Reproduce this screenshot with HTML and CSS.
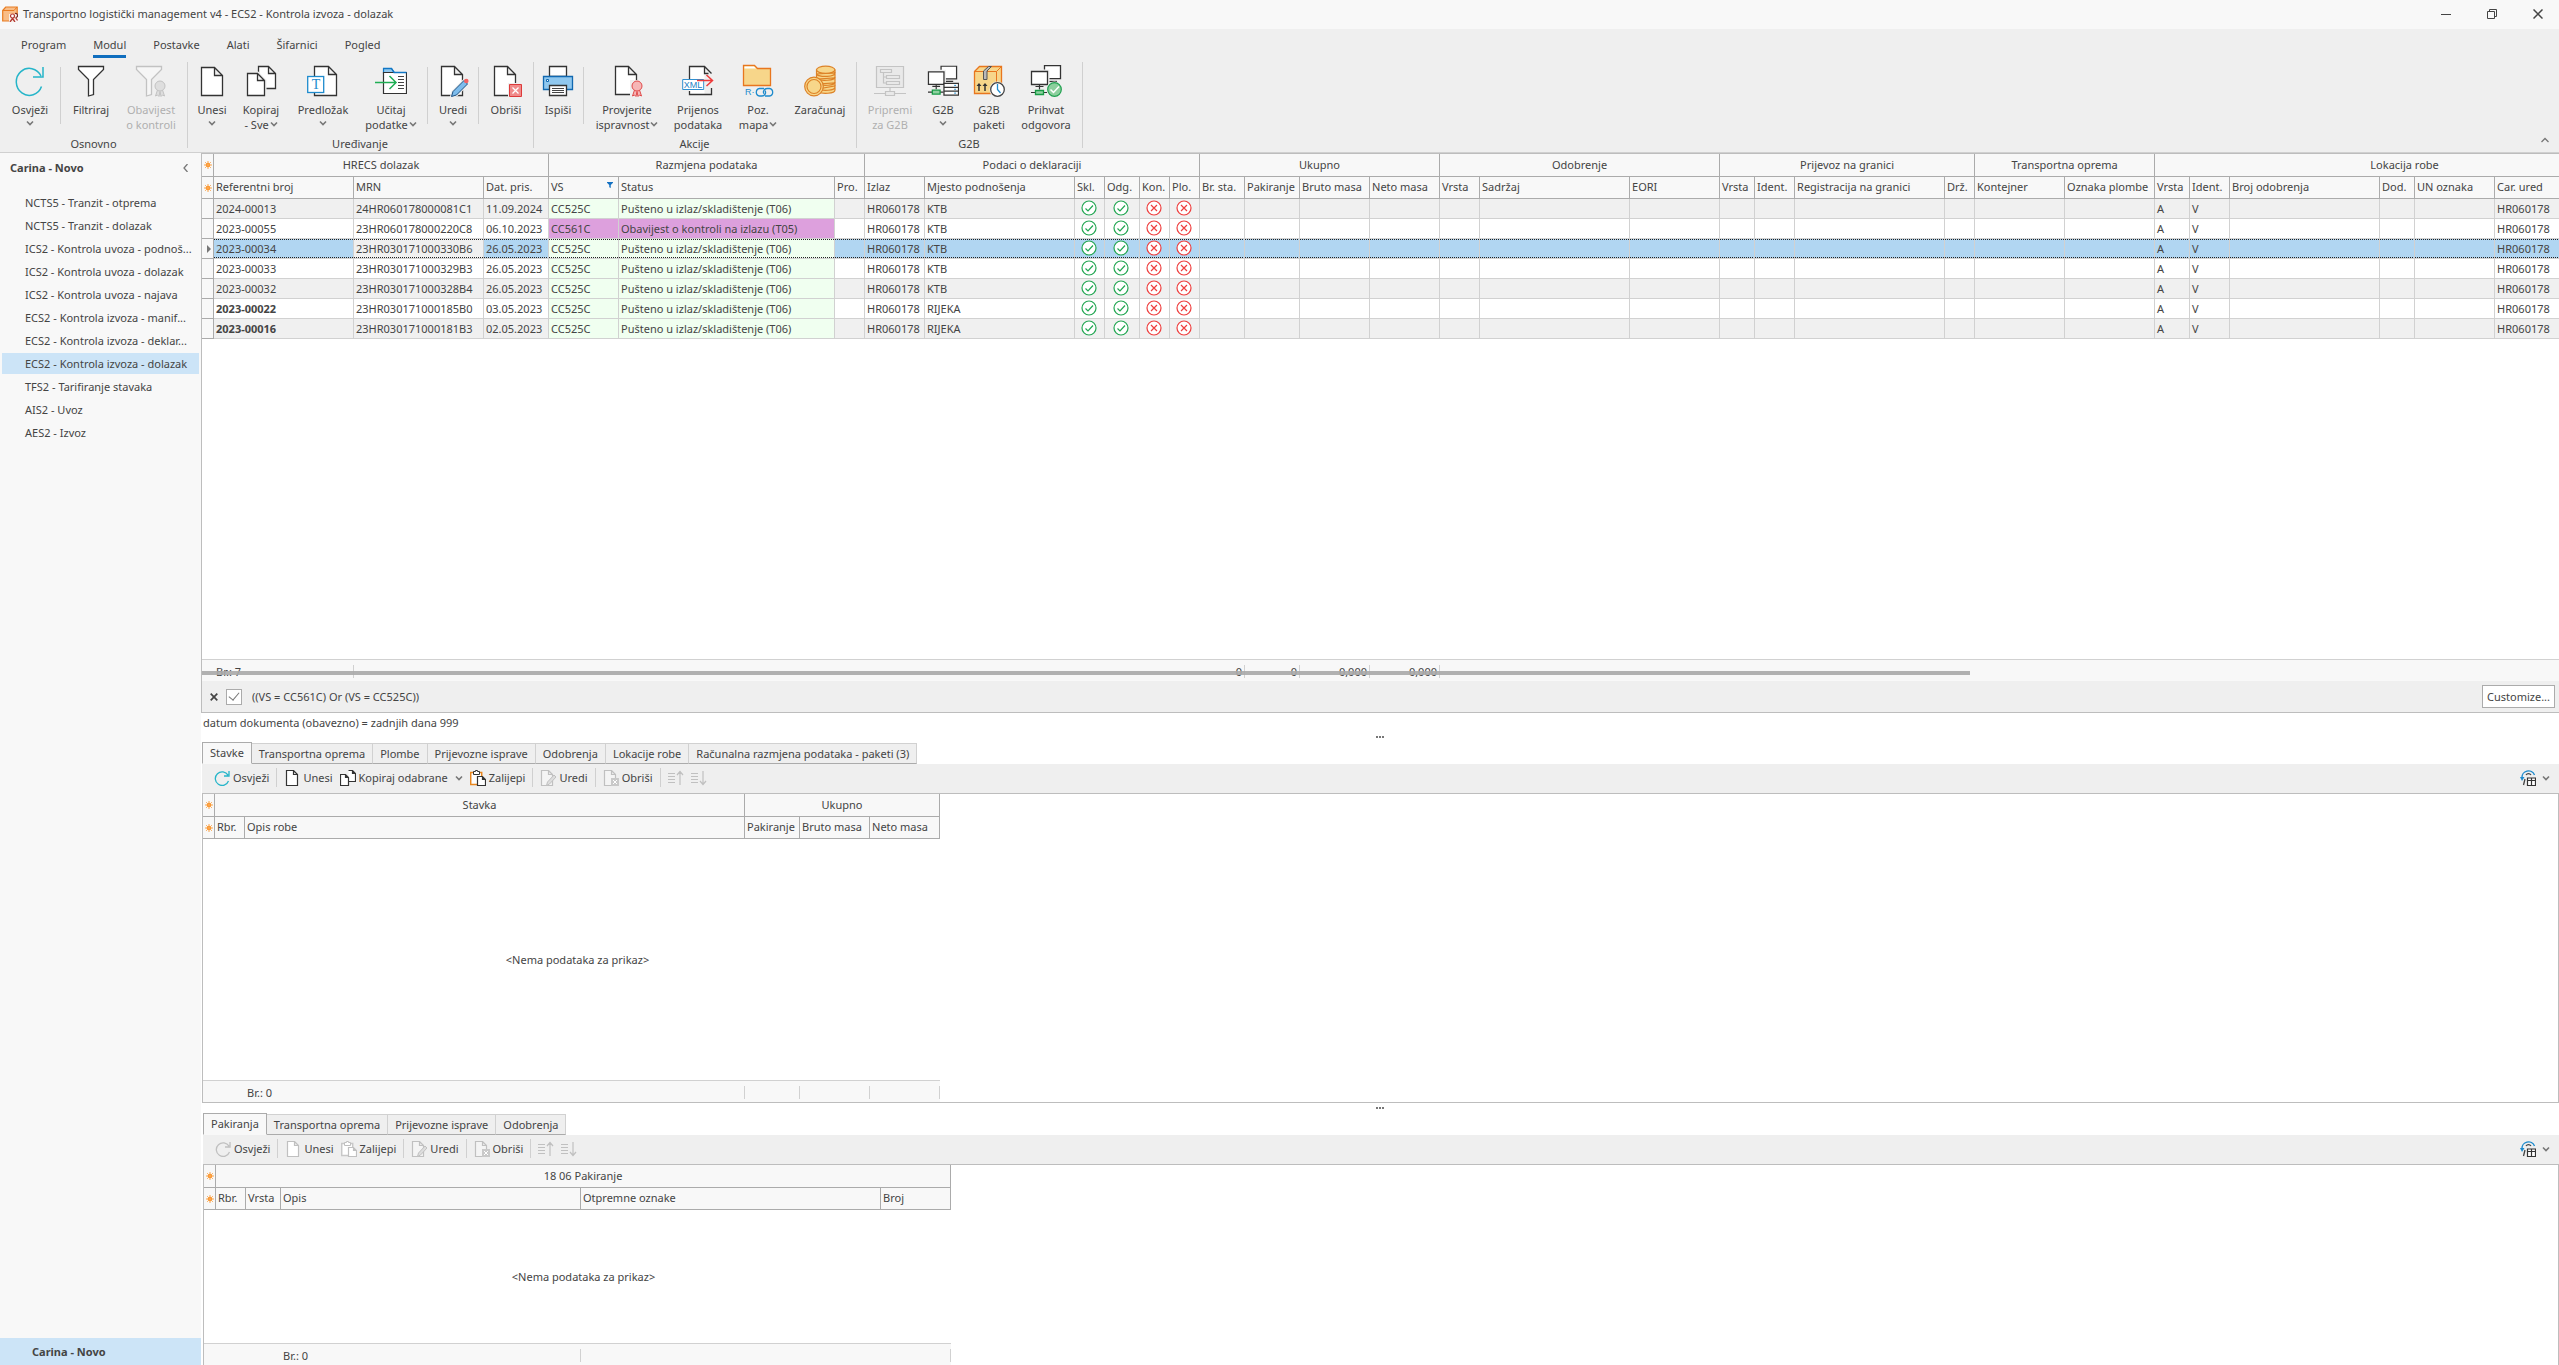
FILE: index.html
```html
<!DOCTYPE html>
<html lang="hr">
<head>
<meta charset="utf-8">
<title>Transportno logistički management v4</title>
<link rel="stylesheet" href="styles.css">
</head>
<body>
<svg class="defs" aria-hidden="true">
  <symbol id="chev" viewBox="0 0 8 8"><path d="M1 2.500l3 3 3-3" fill="none" stroke="#777" stroke-width="1.600"/></symbol>
  <symbol id="star" viewBox="0 0 8 8"><circle cx="4" cy="4" r="2.300" fill="#fb8c1e"/><path d="M4 0v8M0 4h8M1.200 1.200l5.600 5.600M6.800 1.200L1.200 6.800" stroke="#fba64d" stroke-width="1"/></symbol>
  <symbol id="ok" viewBox="0 0 16 16"><circle cx="8" cy="8" r="7" fill="#fff" stroke="#22a652" stroke-width="1.200"/><path d="M4.500 8.500L7 11l5-5.500" fill="none" stroke="#22a652" stroke-width="1.200"/></symbol>
  <symbol id="no" viewBox="0 0 16 16"><circle cx="8" cy="8" r="7" fill="#fff" stroke="#ee3e3e" stroke-width="1.200"/><path d="M5 5l6 6M11 5l-6 6" stroke="#ee3e3e" stroke-width="1.200"/></symbol>
  <symbol id="medal" viewBox="0 0 12 17"><path d="M3.500 10l-2 6 2-1 1.500 1.500 1-5 1 5 1.500-1.500 2 1-2-6" stroke-linejoin="round"/><circle cx="6" cy="6" r="5"/></symbol>

  <symbol id="i-refresh" viewBox="0 0 32 32"><path d="M27.500 21.500A13 13.500 0 1 1 27 11M29 2v10H19" fill="none" stroke="#26b5c9" stroke-width="1.500"/></symbol>
  <symbol id="i-filter" viewBox="0 0 32 32"><path d="M3.500 1.500h25v3L18.500 14.500v15l-5 1.500V14.500L3.500 4.500z" fill="#fff" stroke="#333" stroke-width="1.300"/></symbol>
  <symbol id="i-notice" viewBox="0 0 32 32"><path d="M1.500 1.500h25v3L16.500 14.500v15l-5 1.500V14.500L1.500 4.500z" fill="#f6f6f6" stroke="#c2c2c2" stroke-width="1.300"/><use href="#medal" x="19" y="15" width="12" height="17" fill="#dedede" stroke="#c2c2c2"/></symbol>
  <symbol id="i-new" viewBox="0 0 32 32"><path d="M5.500 2.500h13l8 8v20h-21zM18.500 2.500v8h8" fill="#fff" stroke="#333" stroke-width="1.300"/></symbol>
  <symbol id="i-copy" viewBox="0 0 32 32"><path d="M13.500 1.500h10l7 7v15h-17zM23.500 1.500v7h7" fill="#fff" stroke="#333" stroke-width="1.300"/><path d="M2.500 8.500h10l7 7v15h-17z" fill="#fff" stroke="#efefef" stroke-width="4"/><path d="M2.500 8.500h10l7 7v15h-17zM12.500 8.500v7h7" fill="#fff" stroke="#333" stroke-width="1.300"/></symbol>
  <symbol id="i-load" viewBox="0 0 32 32"><path d="M8.500 8V3.500h8l3 4h12V9z" fill="#90c8ef" stroke="#1177c5" stroke-width="1.200"/><path d="M8.500 7.500h23v21h-23z" fill="#fff" stroke="#333" stroke-width="1.200"/><path d="M8 3.500h8.500l2.500 4h12.500" fill="none" stroke="#1177c5" stroke-width="1.300"/><path d="M23 11.500h6M23 14.500h6M23 17.500h6M23 20.500h6M23 23.500h6" stroke="#444"/><path d="M0 17.500h20.500M14.500 11l6.500 6.500-6.500 6.500" fill="none" stroke="#1fae54" stroke-width="1.500"/></symbol>
  <symbol id="i-edit" viewBox="0 0 32 32"><path d="M4.500 1.500h13l8 8v21h-21zM17.500 1.500v8h8" fill="#fff" stroke="#333" stroke-width="1.300"/><path d="M14.500 31.500l1.500-5 12-12 3.500 3.500-12 12z" fill="#7dbcec" stroke="#efefef" stroke-width="3"/><path d="M14.500 31.500l1.500-5 11-11 3.500 3.500-11 11z" fill="#7dbcec" stroke="#1b4f80" stroke-width="1"/><circle cx="29.300" cy="16" r="2.300" fill="#f46262"/></symbol>
  <symbol id="i-delete" viewBox="0 0 32 32"><path d="M4.500 1.500h13l8 8v21h-21zM17.500 1.500v8h8" fill="#fff" stroke="#333" stroke-width="1.300"/><path d="M18 18h14v14H18z" fill="#efefef"/><path d="M19.500 19.500h12v12h-12z" fill="#f08a8a" stroke="#dd3a3a"/><path d="M22.500 22.500l6 6M28.500 22.500l-6 6" stroke="#fff" stroke-width="1.300"/></symbol>
  <symbol id="i-print" viewBox="0 0 32 32"><path d="M7.500 1.500h17v10h-17z" fill="#fff" stroke="#333" stroke-width="1.300"/><path d="M1.500 11.500h29v13h-29z" fill="#90c8ef" stroke="#1168b0" stroke-width="1.300"/><path d="M4.500 14.500h2v2h-2z" fill="#fff" stroke="#1168b0"/><path d="M7.500 20.500h17v10h-17z" fill="#fff" stroke="#333" stroke-width="1.300"/><path d="M10 23.500h12M10 25.500h12M10 27.500h12" stroke="#444"/></symbol>
  <symbol id="i-check" viewBox="0 0 32 32"><path d="M4.500 1.500h13l8 8v20h-21zM17.500 1.500v8h8" fill="#fff" stroke="#333" stroke-width="1.300"/><path d="M19 15h13v17H19z" fill="#efefef"/><use href="#medal" x="20" y="15" width="12" height="17" fill="#f6b6b6" stroke="#e04a4a"/></symbol>
  <symbol id="i-coins" viewBox="0 0 32 32"><g fill="#f7d68a" stroke="#dd8227" stroke-width="1.200"><path d="M14 24v3c4 2 17 2 17-2v-4zM14 19v5c4 2 17 2 17-2v-4zM14 14v5c4 2 17 2 17-2v-4zM12.500 9v5c4 2 18.500 2 18.500-2V8zM12.500 5v4.500c4 3 18.500 2.500 18.500-1.500V5z"/><ellipse cx="21.700" cy="4.800" rx="9.200" ry="3.600"/><circle cx="10" cy="21.500" r="9.300"/><circle cx="10" cy="21.500" r="7"/></g></symbol>
  <symbol id="i-prepare" viewBox="0 0 32 32"><g fill="#e9e9e9" stroke="#c4c4c4" stroke-width="1.200"><path d="M2.500 1.500h27v21h-27z"/><path d="M6.500 4.500h11v3h-11zM12.500 10.500h13v3h-13zM12.500 16.500h13v3h-13zM9.500 7.500v10.500h3M9.500 12h3M16 22.500v4M0 28.500h32"/><path d="M11.500 26.500h9v4h-9z"/></g></symbol>
  <symbol id="monitors" viewBox="0 0 32 32"><path d="M14.500.7h16v13h-16z" fill="#fff" stroke="#333" stroke-width="1.300"/><path d="M19 16.500h8" stroke="#333" stroke-width="1.300"/><path d="M1.500 6.500h16v13h-16z" fill="#fff" stroke="#efefef" stroke-width="4"/><path d="M1.500 6.500h16v13h-16z" fill="#fff" stroke="#333" stroke-width="1.300"/><path d="M9.500 19.500v5M5.500 21.500h8M1 27.500h16" stroke="#333" stroke-width="1.200"/><path d="M5.500 25.500h8v4h-8z" fill="#8fd0a0" stroke="#169a44" stroke-width="1.300"/></symbol>
  <symbol id="i-g2b" viewBox="0 0 33 32"><use href="#monitors" width="32" height="32"/><path d="M17.500 18.500h15v12h-15zM17.500 22.500h15M17.500 26.500h15" fill="#fff" stroke="#333" stroke-width="1.300"/><path d="M28 20.500h2M28 24.500h2M28 28.500h2" stroke="#1e8bcd"/></symbol>
  <symbol id="i-box" viewBox="0 0 32 32"><path d="M1.500 6.500l5-5h22v22l-5 5h-22z" fill="#f7d68a" stroke="#e8761e" stroke-width="1.300"/><path d="M1.500 6.500h22l5-5M23.500 6.500v22" fill="none" stroke="#e8761e"/><path d="M10.500 14.500V6l5-4.500h3L14 6v8.500z" fill="#b9b9b9" stroke="#555"/><path d="M6 26v-7M12 26v-7" stroke="#333" stroke-width="1.500"/><path d="M3.500 21L6 18l2.500 3zM9.500 21l2.500-3 2.500 3z" fill="#333"/><circle cx="24.500" cy="24.500" r="8" fill="#efefef"/><circle cx="24.500" cy="24.500" r="6.800" fill="#fff" stroke="#444" stroke-width="1.300"/><path d="M24.500 19v5.500l3 3.500" fill="none" stroke="#1e8bcd" stroke-width="1.300"/></symbol>
  <symbol id="i-accept" viewBox="0 0 32 32"><use href="#monitors" width="32" height="32"/><circle cx="24.500" cy="24.500" r="8" fill="#efefef"/><circle cx="24.500" cy="24.500" r="6.800" fill="#8ccf9d" stroke="#1fa04f" stroke-width="1.200"/><path d="M20.500 24.500l3 3 5.500-6" fill="none" stroke="#fff" stroke-width="1.500"/></symbol>

  <symbol id="s-refresh" viewBox="0 0 16 16"><path d="M14.500 11A6.800 6.800 0 1 1 14 5.200M15 1v5h-5" fill="none" stroke="currentColor" stroke-width="1.300"/></symbol>
  <symbol id="s-new" viewBox="0 0 16 16"><path d="M2.500.5h7l4 4v11h-11zM9.500.5v4h4" fill="#fff" stroke="currentColor" stroke-width="1.200"/></symbol>
  <symbol id="s-copy" viewBox="0 0 16 16"><path d="M8.500.5h4l3 3v8h-7M12.500.5v3h3M.5 4.500h5l3 3v8h-8zM5.500 4.500v3h3" fill="#fff" stroke="currentColor" stroke-width="1.200"/></symbol>
  <symbol id="s-paste" viewBox="0 0 16 16"><path d="M.7 2.500h11v12H.7z" fill="#fff" stroke="var(--clip)" stroke-width="1.500"/><path d="M3.500 1.500h2V.5h2v1h2v3h-6z" fill="#fff" stroke="currentColor"/><path d="M7.500 6.500h5l3 3v6h-8zM12.500 6.500v3h3" fill="#fff" stroke="currentColor" stroke-width="1.200"/></symbol>
  <symbol id="s-edit" viewBox="0 0 16 16"><path d="M1.500.5h7l4 4v11h-11zM8.500.5v4h4" fill="#f4f4f4" stroke="currentColor" stroke-width="1.200"/><path d="M6.500 15.500l1-3.500 6.500-7 2 2-6.500 7z" fill="#ddd" stroke="currentColor"/></symbol>
  <symbol id="s-delete" viewBox="0 0 16 16"><path d="M1.500.5h7l4 4v11h-11zM8.500.5v4h4" fill="#f4f4f4" stroke="currentColor" stroke-width="1.200"/><path d="M8 8h8v8H8z" fill="#c9c9c9"/><path d="M10 10l4 4M14 10l-4 4" stroke="#fff"/></symbol>
  <symbol id="s-up" viewBox="0 0 16 16"><path d="M0 3.500h7M0 6.500h7M0 9.500h7M0 12.500h7M12 15V2M9 5l3-3.500L15 5" fill="none" stroke="currentColor" stroke-width="1.200"/></symbol>
  <symbol id="s-down" viewBox="0 0 16 16"><path d="M0 3.500h7M0 6.500h7M0 9.500h7M0 12.500h7M12 1v13M9 11l3 3.500 3-3.500" fill="none" stroke="currentColor" stroke-width="1.200"/></symbol>
  <symbol id="s-view" viewBox="0 0 16 16"><path d="M2 8a6.500 6.500 0 0 1 12.500-3" fill="none" stroke="#1e8bcd" stroke-width="1.400"/><path d="M0 7h4.500L2 11z" fill="#1e8bcd"/><path d="M6 5a3 3 0 0 1 5 0M5 9l-1.500 6" fill="none" stroke="#444" stroke-width="1.300"/><path d="M7.500 8h8v7.500h-8zM7.500 10.500h8M11.500 8v7.500" fill="#fff" stroke="#333" stroke-width="1.200"/></symbol>
</svg>

<header class="titlebar">
  <svg class="app-icon" viewBox="0 0 16 16"><path d="M.7 4.500l3-3.500h11.500v9l-4 5H.7z" fill="#f9bd87" stroke="#e87c22" stroke-width="1.200"/><path d="M1 4.500h11l3-3.500" fill="none" stroke="#e87c22"/><path d="M7 8h9v8H7z" fill="#f8f8f8" opacity=".85"/><path d="M10.500 12.500l-2.500 3.500M10.500 12.500l2.500 3.500M13.500 11.500l2 3" stroke="#b33a32" stroke-width="1.300"/><circle cx="10.500" cy="10" r="2" fill="#fff" stroke="#b33a32" stroke-width="1.200"/><path d="M13 7.500a2 2 0 0 1 1 4" fill="none" stroke="#7a2a24" stroke-width="1.200"/></svg>
  <h1 class="title">Transportno logistički management v4 - ECS2 - Kontrola izvoza - dolazak</h1>
  <div class="window-buttons">
    <button aria-label="Minimiziraj"><svg viewBox="0 0 10 10"><path d="M0 5.500h10" stroke="#444"/></svg></button>
    <button aria-label="Vrati"><svg viewBox="0 0 10 10"><path d="M.5 2.500h7v7h-7zM2.500 2.500v-2h7v7h-2" fill="none" stroke="#444"/></svg></button>
    <button aria-label="Zatvori"><svg viewBox="0 0 10 10"><path d="M.5.5l9 9M9.500.5l-9 9" stroke="#444" stroke-width="1.500"/></svg></button>
  </div>
</header>

<div class="ribbon">
  <nav class="ribbon-tabs">
    <button>Program</button><button class="active">Modul</button><button>Postavke</button><button>Alati</button><button>Šifarnici</button><button>Pogled</button>
  </nav>
  <div class="ribbon-groups">
    <section class="group">
      <div class="group-items">
        <button class="big w54"><svg><use href="#i-refresh"/></svg><span>Osvježi</span><svg class="chev"><use href="#chev"/></svg></button>
        <i class="sep"></i>
        <button class="big w54"><svg><use href="#i-filter"/></svg><span>Filtriraj</span></button>
        <button class="big w66" disabled><svg><use href="#i-notice"/></svg><span>Obavijest<br>o kontroli</span></button>
      </div>
      <h2>Osnovno</h2>
    </section>
    <section class="group">
      <div class="group-items">
        <button class="big w44"><svg><use href="#i-new"/></svg><span>Unesi</span><svg class="chev"><use href="#chev"/></svg></button>
        <button class="big w54"><svg><use href="#i-copy"/></svg><span>Kopiraj<br>- Sve <svg class="chev"><use href="#chev"/></svg></span></button>
        <button class="big w70"><svg viewBox="0 0 32 32"><path d="M7.500 1.500h14l8 8v21h-22zM21.500 1.500v8h8" fill="#fff" stroke="#333" stroke-width="1.300"/><rect x=".7" y="11.500" width="16" height="16" fill="#fff" stroke="#1e8bcd" stroke-width="1.300"/><text x="9" y="24" text-anchor="middle" class="svg-serif" font-size="14" fill="#1e8bcd">T</text></svg><span>Predložak</span><svg class="chev"><use href="#chev"/></svg></button>
        <button class="big w66"><svg><use href="#i-load"/></svg><span>Učitaj<br>podatke <svg class="chev"><use href="#chev"/></svg></span></button>
        <i class="sep"></i>
        <button class="big w44"><svg><use href="#i-edit"/></svg><span>Uredi</span><svg class="chev"><use href="#chev"/></svg></button>
        <i class="sep"></i>
        <button class="big w48"><svg><use href="#i-delete"/></svg><span>Obriši</span></button>
      </div>
      <h2>Uređivanje</h2>
    </section>
    <section class="group">
      <div class="group-items">
        <button class="big w44"><svg><use href="#i-print"/></svg><span>Ispiši</span></button>
        <i class="sep"></i>
        <button class="big w80"><svg><use href="#i-check"/></svg><span>Provjerite<br>ispravnost <svg class="chev"><use href="#chev"/></svg></span></button>
        <button class="big w62"><svg viewBox="0 0 32 32"><path d="M7.500 1h15v29h-15z" fill="#fff"/><path d="M7.500 14V1.500h15l7 7M22.500 1.500v7h4M7.500 26v3.500h22V23" fill="none" stroke="#333" stroke-width="1.300"/><path d="M.7 14.500h21v10H.7z" fill="#fff" stroke="#2f8fd0"/><text x="11" y="23" text-anchor="middle" class="svg-sans" font-size="9" fill="#1e7fc5">XML</text><path d="M15 15.500h15M24.500 10l6 5.500-6 5.500" fill="none" stroke="#ee3a3a" stroke-width="1.500"/></svg><span>Prijenos<br>podataka</span></button>
        <button class="big w58"><svg viewBox="0 0 32 32"><path d="M1.500 20.500v-20h11l3 3h13v17z" fill="#f7d68a" stroke="#e8761e" stroke-width="1.300"/><path d="M2.500 3.500V1.500h9.500l2 2z" fill="#fff"/><text x="3" y="30" class="svg-sans" font-size="9" fill="#1e8bcd">R·</text><g fill="none" stroke="#1e8bcd" stroke-width="1.300"><path d="M22 23.500h-4.500a3.800 3.800 0 0 0 0 7.500H20a3.600 3.600 0 0 0 3-5.500"/><path d="M23 31h4.500a3.800 3.800 0 0 0 0-7.500H25a3.600 3.600 0 0 0-3 5.500"/></g></svg><span>Poz.<br>mapa <svg class="chev"><use href="#chev"/></svg></span></button>
        <button class="big w66"><svg><use href="#i-coins"/></svg><span>Zaračunaj</span></button>
      </div>
      <h2>Akcije</h2>
    </section>
    <section class="group">
      <div class="group-items">
        <button class="big w62" disabled><svg><use href="#i-prepare"/></svg><span>Pripremi<br>za G2B</span></button>
        <button class="big w44"><svg><use href="#i-g2b"/></svg><span>G2B</span><svg class="chev"><use href="#chev"/></svg></button>
        <button class="big w48"><svg><use href="#i-box"/></svg><span>G2B<br>paketi</span></button>
        <button class="big w66"><svg><use href="#i-accept"/></svg><span>Prihvat<br>odgovora</span></button>
      </div>
      <h2>G2B</h2>
    </section>
    <button class="collapse" aria-label="Sažmi vrpcu"><svg viewBox="0 0 8 8"><path d="M.5 6L4 2.500 7.500 6" fill="none" stroke="#777" stroke-width="1.300"/></svg></button>
  </div>
</div>

<div class="shell">
  <aside class="sidebar">
    <div class="side-head"><h2>Carina - Novo</h2><button aria-label="Sakrij"><svg viewBox="0 0 8 8"><path d="M5.500 0L2 4l3.500 4" fill="none" stroke="#777" stroke-width="1.300"/></svg></button></div>
    <nav class="side-nav">
      <a href="#">NCTS5 - Tranzit - otprema</a>
      <a href="#">NCTS5 - Tranzit - dolazak</a>
      <a href="#">ICS2 - Kontrola uvoza - podnoš...</a>
      <a href="#">ICS2 - Kontrola uvoza - dolazak</a>
      <a href="#">ICS2 - Kontrola uvoza - najava</a>
      <a href="#">ECS2 - Kontrola izvoza - manif...</a>
      <a href="#">ECS2 - Kontrola izvoza - deklar...</a>
      <a href="#" class="active">ECS2 - Kontrola izvoza - dolazak</a>
      <a href="#">TFS2 - Tarifiranje stavaka</a>
      <a href="#">AIS2 - Uvoz</a>
      <a href="#">AES2 - Izvoz</a>
    </nav>
    <a href="#" class="side-group">Carina - Novo</a>
  </aside>

  <main class="main">
    <section class="master">
      <div class="master-scroll">
        <table class="grid master-table">
          <colgroup><col class="c12"><col class="c140"><col class="c130"><col class="c65"><col class="c70"><col class="c216"><col class="c30"><col class="c60"><col class="c150"><col class="c30"><col class="c35"><col class="c30"><col class="c30"><col class="c45"><col class="c55"><col class="c70"><col class="c70"><col class="c40"><col class="c150"><col class="c90"><col class="c35"><col class="c40"><col class="c150"><col class="c30"><col class="c90"><col class="c90"><col class="c35"><col class="c40"><col class="c150"><col class="c35"><col class="c80"><col class="c160"></colgroup>
          <thead>
            <tr class="bands"><th><svg class="star"><use href="#star"/></svg></th><th colspan="3">HRECS dolazak</th><th colspan="3">Razmjena podataka</th><th colspan="6">Podaci o deklaraciji</th><th colspan="4">Ukupno</th><th colspan="3">Odobrenje</th><th colspan="4">Prijevoz na granici</th><th colspan="2">Transportna oprema</th><th colspan="6">Lokacija robe</th></tr>
            <tr><th><svg class="star"><use href="#star"/></svg></th><th>Referentni broj</th><th>MRN</th><th>Dat. pris.</th><th><span class="filtered">VS<svg viewBox="0 0 8 8"><path d="M0 0h8v1L5 4v4L3 7V4L0 1z" fill="#1471c2"/></svg></span></th><th>Status</th><th>Pro.</th><th>Izlaz</th><th>Mjesto podnošenja</th><th>Skl.</th><th>Odg.</th><th>Kon.</th><th>Plo.</th><th>Br. sta.</th><th>Pakiranje</th><th>Bruto masa</th><th>Neto masa</th><th>Vrsta</th><th>Sadržaj</th><th>EORI</th><th>Vrsta</th><th>Ident.</th><th>Registracija na granici</th><th>Drž.</th><th>Kontejner</th><th>Oznaka plombe</th><th>Vrsta</th><th>Ident.</th><th>Broj odobrenja</th><th>Dod.</th><th>UN oznaka</th><th>Car. ured</th></tr>
          </thead>
          <tbody>
            <tr><th></th><td>2024-00013</td><td>24HR060178000081C1</td><td>11.09.2024</td><td class="released">CC525C</td><td class="released">Pušteno u izlaz/skladištenje (T06)</td><td></td><td>HR060178</td><td>KTB</td><td class="flag"><svg><use href="#ok"/></svg></td><td class="flag"><svg><use href="#ok"/></svg></td><td class="flag"><svg><use href="#no"/></svg></td><td class="flag"><svg><use href="#no"/></svg></td><td></td><td></td><td></td><td></td><td></td><td></td><td></td><td></td><td></td><td></td><td></td><td></td><td></td><td>A</td><td>V</td><td></td><td></td><td></td><td>HR060178</td></tr>
            <tr><th></th><td>2023-00055</td><td>23HR060178000220C8</td><td>06.10.2023</td><td class="control">CC561C</td><td class="control">Obavijest o kontroli na izlazu (T05)</td><td></td><td>HR060178</td><td>KTB</td><td class="flag"><svg><use href="#ok"/></svg></td><td class="flag"><svg><use href="#ok"/></svg></td><td class="flag"><svg><use href="#no"/></svg></td><td class="flag"><svg><use href="#no"/></svg></td><td></td><td></td><td></td><td></td><td></td><td></td><td></td><td></td><td></td><td></td><td></td><td></td><td></td><td>A</td><td>V</td><td></td><td></td><td></td><td>HR060178</td></tr>
            <tr class="selected"><th><svg class="star" viewBox="0 0 8 8"><path d="M3 0l4 4-4 4z" fill="#777"/></svg></th><td>2023-00034</td><td class="focused">23HR030171000330B6</td><td>26.05.2023</td><td class="released">CC525C</td><td class="released">Pušteno u izlaz/skladištenje (T06)</td><td></td><td>HR060178</td><td>KTB</td><td class="flag"><svg><use href="#ok"/></svg></td><td class="flag"><svg><use href="#ok"/></svg></td><td class="flag"><svg><use href="#no"/></svg></td><td class="flag"><svg><use href="#no"/></svg></td><td></td><td></td><td></td><td></td><td></td><td></td><td></td><td></td><td></td><td></td><td></td><td></td><td></td><td>A</td><td>V</td><td></td><td></td><td></td><td>HR060178</td></tr>
            <tr><th></th><td>2023-00033</td><td>23HR030171000329B3</td><td>26.05.2023</td><td class="released">CC525C</td><td class="released">Pušteno u izlaz/skladištenje (T06)</td><td></td><td>HR060178</td><td>KTB</td><td class="flag"><svg><use href="#ok"/></svg></td><td class="flag"><svg><use href="#ok"/></svg></td><td class="flag"><svg><use href="#no"/></svg></td><td class="flag"><svg><use href="#no"/></svg></td><td></td><td></td><td></td><td></td><td></td><td></td><td></td><td></td><td></td><td></td><td></td><td></td><td></td><td>A</td><td>V</td><td></td><td></td><td></td><td>HR060178</td></tr>
            <tr><th></th><td>2023-00032</td><td>23HR030171000328B4</td><td>26.05.2023</td><td class="released">CC525C</td><td class="released">Pušteno u izlaz/skladištenje (T06)</td><td></td><td>HR060178</td><td>KTB</td><td class="flag"><svg><use href="#ok"/></svg></td><td class="flag"><svg><use href="#ok"/></svg></td><td class="flag"><svg><use href="#no"/></svg></td><td class="flag"><svg><use href="#no"/></svg></td><td></td><td></td><td></td><td></td><td></td><td></td><td></td><td></td><td></td><td></td><td></td><td></td><td></td><td>A</td><td>V</td><td></td><td></td><td></td><td>HR060178</td></tr>
            <tr><th></th><td><b>2023-00022</b></td><td>23HR030171000185B0</td><td>03.05.2023</td><td class="released">CC525C</td><td class="released">Pušteno u izlaz/skladištenje (T06)</td><td></td><td>HR060178</td><td>RIJEKA</td><td class="flag"><svg><use href="#ok"/></svg></td><td class="flag"><svg><use href="#ok"/></svg></td><td class="flag"><svg><use href="#no"/></svg></td><td class="flag"><svg><use href="#no"/></svg></td><td></td><td></td><td></td><td></td><td></td><td></td><td></td><td></td><td></td><td></td><td></td><td></td><td></td><td>A</td><td>V</td><td></td><td></td><td></td><td>HR060178</td></tr>
            <tr><th></th><td><b>2023-00016</b></td><td>23HR030171000181B3</td><td>02.05.2023</td><td class="released">CC525C</td><td class="released">Pušteno u izlaz/skladištenje (T06)</td><td></td><td>HR060178</td><td>RIJEKA</td><td class="flag"><svg><use href="#ok"/></svg></td><td class="flag"><svg><use href="#ok"/></svg></td><td class="flag"><svg><use href="#no"/></svg></td><td class="flag"><svg><use href="#no"/></svg></td><td></td><td></td><td></td><td></td><td></td><td></td><td></td><td></td><td></td><td></td><td></td><td></td><td></td><td>A</td><td>V</td><td></td><td></td><td></td><td>HR060178</td></tr>
          </tbody>
        </table>
      </div>
      <div class="summary master-summary">
        <span class="c12 bare"></span><span class="c140">Br.: 7</span><span class="c846 bare"></span><span class="c45 num">0</span><span class="c55 num">0</span><span class="c70 num">0,000</span><span class="c70 num">0,000</span>
        <div class="thumb"></div>
      </div>
      <div class="filter-bar">
        <button class="clear" aria-label="Ukloni filtar"><svg viewBox="0 0 8 8"><path d="M.7.7l6.600 6.600M7.300.7L.7 7.300" stroke="#444" stroke-width="1.700"/></svg></button>
        <input type="checkbox" id="filter-on" checked>
        <label for="filter-on">((VS = CC561C) Or (VS = CC525C))</label>
        <button class="customize">Customize...</button>
      </div>
    </section>

    <div class="conditions"><p>datum dokumenta (obavezno) = zadnjih dana 999</p><div class="splitter"><i></i><i></i><i></i></div></div>

    <section class="panel">
      <div class="tabs" role="tablist">
        <button role="tab" class="active">Stavke</button><button role="tab">Transportna oprema</button><button role="tab">Plombe</button><button role="tab">Prijevozne isprave</button><button role="tab">Odobrenja</button><button role="tab">Lokacije robe</button><button role="tab">Računalna razmjena podataka - paketi (3)</button>
      </div>
      <div class="toolbar">
        <button class="teal"><svg><use href="#s-refresh"/></svg>Osvježi</button><i class="sep"></i>
        <button><svg><use href="#s-new"/></svg>Unesi</button>
        <button><svg><use href="#s-copy"/></svg>Kopiraj odabrane<svg class="chev"><use href="#chev"/></svg></button>
        <button><svg><use href="#s-paste"/></svg>Zalijepi</button><i class="sep"></i>
        <button class="dim"><svg><use href="#s-edit"/></svg>Uredi</button><i class="sep"></i>
        <button class="dim"><svg><use href="#s-delete"/></svg>Obriši</button><i class="sep"></i>
        <button class="dim" aria-label="Gore"><svg><use href="#s-up"/></svg></button>
        <button class="dim" aria-label="Dolje"><svg><use href="#s-down"/></svg></button>
        <button class="view" aria-label="Prikaz"><svg><use href="#s-view"/></svg><svg class="chev"><use href="#chev"/></svg></button>
      </div>
      <div class="view-area">
        <div class="sheet items">
          <table class="grid">
            <colgroup><col class="c12"><col class="c30"><col class="c500"><col class="c55"><col class="c70"><col class="c70"></colgroup>
            <thead>
              <tr class="bands"><th><svg class="star"><use href="#star"/></svg></th><th colspan="2">Stavka</th><th colspan="3">Ukupno</th></tr>
              <tr><th><svg class="star"><use href="#star"/></svg></th><th>Rbr.</th><th>Opis robe</th><th>Pakiranje</th><th>Bruto masa</th><th>Neto masa</th></tr>
            </thead>
          </table>
          <p class="empty">&lt;Nema podataka za prikaz&gt;</p>
          <div class="summary"><span class="c12 bare"></span><span class="c30 bare"></span><span class="c500">Br.: 0</span><span class="c55"></span><span class="c70"></span><span class="c70"></span></div>
        </div>
      </div>
    </section>

    <div class="splitter"><i></i><i></i><i></i></div>

    <section class="panel nested">
      <div class="tabs" role="tablist">
        <button role="tab" class="active">Pakiranja</button><button role="tab">Transportna oprema</button><button role="tab">Prijevozne isprave</button><button role="tab">Odobrenja</button>
      </div>
      <div class="toolbar">
        <button class="dim"><svg><use href="#s-refresh"/></svg>Osvježi</button><i class="sep"></i>
        <button class="dim"><svg><use href="#s-new"/></svg>Unesi</button>
        <button class="dim"><svg><use href="#s-paste"/></svg>Zalijepi</button><i class="sep"></i>
        <button class="dim"><svg><use href="#s-edit"/></svg>Uredi</button><i class="sep"></i>
        <button class="dim"><svg><use href="#s-delete"/></svg>Obriši</button><i class="sep"></i>
        <button class="dim" aria-label="Gore"><svg><use href="#s-up"/></svg></button>
        <button class="dim" aria-label="Dolje"><svg><use href="#s-down"/></svg></button>
        <button class="view" aria-label="Prikaz"><svg><use href="#s-view"/></svg><svg class="chev"><use href="#chev"/></svg></button>
      </div>
      <div class="view-area open">
        <div class="sheet packs">
          <table class="grid">
            <colgroup><col class="c12"><col class="c30"><col class="c35"><col class="c300"><col class="c300"><col class="c70"></colgroup>
            <thead>
              <tr class="bands"><th><svg class="star"><use href="#star"/></svg></th><th colspan="5">18 06 Pakiranje</th></tr>
              <tr><th><svg class="star"><use href="#star"/></svg></th><th>Rbr.</th><th>Vrsta</th><th>Opis</th><th>Otpremne oznake</th><th>Broj</th></tr>
            </thead>
          </table>
          <p class="empty">&lt;Nema podataka za prikaz&gt;</p>
          <div class="summary"><span class="c12 bare"></span><span class="c30 bare"></span><span class="c35 bare"></span><span class="c300">Br.: 0</span><span class="c300 bare"></span><span class="c70"></span></div>
        </div>
      </div>
    </section>
  </main>
</div>
</body>
</html>
```
FILE: styles.css
```css
* { box-sizing: border-box; }

html, body { height: 100%; }

body {
  margin: 0;
  display: flex;
  flex-direction: column;
  overflow: hidden;
  background: #fff;
  color: #444;
  font: 11px/15px "Noto Sans", "Open Sans", sans-serif;
  font-variant-ligatures: none;
}

h1, h2, p { margin: 0; font-size: inherit; font-weight: 400; }
button { margin: 0; padding: 0; border: 0; background: none; color: inherit; font: inherit; white-space: nowrap; }
a { color: inherit; text-decoration: none; }
svg { display: block; flex: none; }
.defs { position: absolute; width: 0; height: 0; }
.svg-serif { font-family: "Liberation Serif", serif; }
.svg-sans { font-family: "Liberation Sans", sans-serif; }
.chev { width: 8px; height: 8px; }

/* Title bar */
.titlebar { flex: none; display: flex; align-items: center; height: 29px; padding: 0 0 2px 2px; background: #f8f8f8; }
.app-icon { width: 16px; height: 16px; margin-right: 5px; }
.window-buttons { display: flex; gap: 4px; margin-left: auto; }
.window-buttons button { width: 42px; height: 27px; display: grid; place-items: center; }
.window-buttons svg { width: 10px; height: 10px; }

/* Ribbon */
.ribbon { flex: none; height: 124px; background: #efefef; border-bottom: 1px solid #d0d0d0; }
.ribbon-tabs { display: flex; gap: 27px; padding: 8px 21px 0; }
.ribbon-tabs button { height: 21px; padding-bottom: 3px; border-bottom: 3px solid transparent; }
.ribbon-tabs .active { border-color: #106ebe; }
.ribbon-groups { display: flex; padding: 4px 0 0 1px; }
.group { height: 86px; padding: 0 3px 0 2px; border-right: 1px solid #d0d0d0; display: flex; flex-direction: column; }
.group h2 { text-align: center; }
.group-items { flex: none; display: flex; height: 74px; }
.group .sep { width: 1px; height: 57px; margin: 5px 3px 0; background: #d0d0d0; }
.big { display: flex; flex-direction: column; align-items: center; padding-top: 3px; text-align: center; }
.big > svg { width: 32px; height: 32px; margin-bottom: 5px; overflow: visible; }
.big > .chev { width: 8px; height: 8px; margin-top: 2px; }
.big span .chev { display: inline-block; vertical-align: 1px; margin-left: -2px; }
.big:disabled { color: #b0b0b0; }
.w44 { width: 44px; }
.w48 { width: 48px; }
.w54 { width: 54px; }
.w58 { width: 58px; }
.w62 { width: 62px; }
.w66 { width: 66px; }
.w70 { width: 70px; }
.w80 { width: 80px; }
.collapse { margin: auto 10px 4px auto; }
.collapse svg { width: 8px; height: 8px; }

/* Layout below the ribbon */
.shell { flex: 1; min-height: 0; display: flex; }
.sidebar { flex: none; width: 201px; display: flex; flex-direction: column; background: #f8f8f8; }
.side-head { display: flex; align-items: center; justify-content: space-between; padding: 7px 11px 0 10px; }
.side-head h2, .side-group { font-weight: 700; }
.side-head svg { width: 8px; height: 8px; }
.side-nav { display: flex; flex-direction: column; gap: 2px; padding: 17px 2px 0; }
.side-nav a { padding: 3px 0 3px 23px; white-space: nowrap; overflow: hidden; }
.side-nav .active { background: #cce4f7; }
.side-group { margin-top: auto; padding: 6px 32px; background: #cce4f7; }

.main {
  flex: 1;
  min-width: 0;
  display: grid;
  grid-template-columns: minmax(0, 1fr);
  grid-template-rows: 560fr 29px 361fr 10px 252fr;
}

/* Data grids */
.grid { width: 100%; border-spacing: 0; table-layout: fixed; }
.grid th, .grid td { padding: 0 2px 2px; overflow: hidden; white-space: nowrap; text-align: left; font-weight: 400; }
.grid th { background: #f8f8f8; border: solid #ababab; border-width: 0 1px 1px 0; }
.grid thead th { height: 22px; }
.grid .bands th { height: 23px; text-align: center; }
.grid th:first-child { padding: 0; }
.star { width: 8px; height: 8px; margin: 0 auto; }
.grid tbody tr { background: #fff; }
.grid tbody tr:nth-child(odd) { background: #f0f0f0; }
.grid tbody th, .grid td { height: 20px; }
.grid td { padding-bottom: 1px; border: solid #d1d1d1; border-width: 0 1px 1px 0; }
.grid td.released { background-color: #f0fff0; }
.grid td.control { background-color: #dda0dd; }
.grid tbody tr.selected { background-color: #b1d6f2; }
.selected td {
  background-image: repeating-linear-gradient(90deg, #222 0 1px, transparent 1px 2px), repeating-linear-gradient(90deg, #222 0 1px, transparent 1px 2px);
  background-size: 100% 1px;
  background-position: top, bottom;
  background-repeat: no-repeat;
}
.grid td.focused { background-color: #f0f0f0; }
.grid .flag { padding: 0 4px 2px 2px; }
.flag svg { width: 16px; height: 16px; margin: 0 auto; }
.filtered { display: flex; align-items: center; justify-content: space-between; padding-right: 3px; }
.filtered svg { width: 6px; height: 6px; margin-bottom: 3px; }

.c12 { width: 12px; }
.c30 { width: 30px; }
.c35 { width: 35px; }
.c40 { width: 40px; }
.c45 { width: 45px; }
.c55 { width: 55px; }
.c60 { width: 60px; }
.c65 { width: 65px; }
.c70 { width: 70px; }
.c80 { width: 80px; }
.c90 { width: 90px; }
.c130 { width: 130px; }
.c140 { width: 140px; }
.c150 { width: 150px; }
.c160 { width: 160px; }
.c216 { width: 216px; }
.c300 { width: 300px; }
.c500 { width: 500px; }
.c846 { width: 846px; }

.summary { flex: none; display: flex; align-items: center; height: 22px; padding-top: 2px; border-top: 1px solid #d1d1d1; background: #f8f8f8; }
.summary span { flex: none; height: 13px; line-height: 13px; padding: 0 2px; border-right: 1px solid #d1d1d1; }
.summary .bare { border-color: transparent; padding: 0; }
.summary .num { text-align: right; }

/* Master list */
.master { display: flex; flex-direction: column; min-height: 0; border: solid #bdbdbd; border-width: 1px 0 1px 1px; }
.master-scroll { flex: 1; min-height: 0; overflow: hidden; }
.master-table { width: 2452px; }
.master-summary { position: relative; }
.thumb { position: absolute; left: 0; bottom: 6px; width: 75%; height: 4px; background: #a8a8a8; opacity: .9; }
.filter-bar { flex: none; display: flex; align-items: center; height: 31px; padding: 0 4px 0 8px; background: #efefef; }
.clear { width: 8px; height: 8px; }
.filter-bar input { appearance: none; width: 16px; height: 16px; margin: 0 10px 0 8px; border: 1px solid #ababab; background: #fff; display: grid; place-items: center; }
.filter-bar input:checked::before { content: ""; width: 9px; height: 5px; margin-bottom: 3px; border: solid #777; border-width: 0 0 1px 1px; rotate: -50deg; }
.customize { width: 73px; height: 23px; margin-left: auto; border: 1px solid #ababab; background: #fff; }

/* Conditions line and splitters */
.conditions { display: flex; flex-direction: column; justify-content: space-between; padding: 2px 0 4px; }
.conditions p { padding-left: 2px; }
.splitter { display: flex; justify-content: center; align-items: center; gap: 1px; }
.splitter i { width: 2px; height: 2px; background: #777; }

/* Detail panels */
.panel { display: flex; flex-direction: column; min-height: 0; margin-left: 1px; }
.nested { margin-left: 2px; }
.tabs { flex: none; display: flex; height: 22px; align-items: flex-end; }
.tabs button { height: 21px; padding: 0 7px; background: #efefef; border: 1px solid #d1d1d1; border-left-width: 0; border-bottom-color: #ababab; }
.tabs .active { height: 22px; padding-bottom: 2px; background: #f8f8f8; border: 1px solid #ababab; border-bottom-color: #f8f8f8; }
.toolbar { flex: none; display: flex; align-items: center; gap: 7px; height: 29px; padding: 0 9px 2px 12px; background: #efefef; }
.toolbar button { display: flex; align-items: center; gap: 3px; }
.toolbar svg { width: 16px; height: 16px; color: #333; --clip: #e8861e; }
.toolbar .teal svg { color: #26b5c9; }
.toolbar .dim svg { color: #c0c0c0; --clip: #c8c8c8; }
.toolbar .chev { width: 8px; height: 8px; margin-left: 4px; }
.toolbar .sep { width: 1px; height: 19px; background: #d0d0d0; }
.toolbar .view { gap: 2px; margin-left: auto; }
.view-area { flex: 1; min-height: 0; display: flex; border: 1px solid #bdbdbd; }
.view-area.open { border-bottom: 0; }
.sheet { display: flex; flex-direction: column; }
.items { width: 737px; }
.packs { width: 747px; }
.empty { flex: 1; display: grid; place-items: center; padding-left: 12px; }
```
